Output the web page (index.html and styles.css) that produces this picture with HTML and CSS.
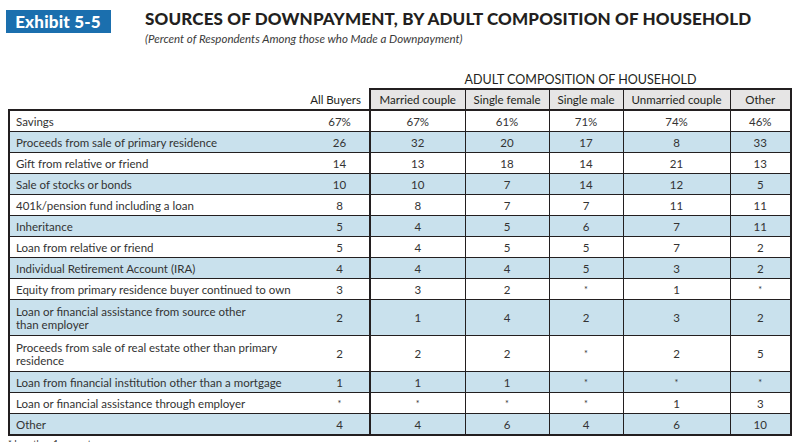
FILE: index.html
```html
<!DOCTYPE html>
<html>
<head>
<meta charset="utf-8">
<link rel="stylesheet" href="styles.css">
</head>
<body>
<div class="page">
  <header class="top">
    <div class="badge">Exhibit 5-5</div>
    <div class="titles">
      <h1 class="title">SOURCES OF DOWNPAYMENT, BY ADULT COMPOSITION OF HOUSEHOLD</h1>
      <p class="sub">(Percent of Respondents Among those who Made a Downpayment)</p>
    </div>
  </header>
  <table class="data">
    <colgroup>
      <col class="w-label"><col class="w-all"><col class="w-mc"><col class="w-sf"><col class="w-sm"><col class="w-uc"><col class="w-ot">
    </colgroup>
    <thead>
      <tr class="group"><th colspan="2"></th><th colspan="5">ADULT COMPOSITION OF HOUSEHOLD</th></tr>
      <tr class="cols">
        <th class="blank"></th>
        <th class="all">All Buyers</th>
        <th class="c first">Married couple</th>
        <th class="c">Single female</th>
        <th class="c">Single male</th>
        <th class="c">Unmarried couple</th>
        <th class="c last">Other</th>
      </tr>
    </thead>
    <tbody>
      <tr><td class="lab">Savings</td><td>67%</td><td class="first">67%</td><td>61%</td><td>71%</td><td>74%</td><td class="last">46%</td></tr>
      <tr class="alt"><td class="lab">Proceeds from sale of primary residence</td><td>26</td><td class="first">32</td><td>20</td><td>17</td><td>8</td><td class="last">33</td></tr>
      <tr><td class="lab">Gift from relative or friend</td><td>14</td><td class="first">13</td><td>18</td><td>14</td><td>21</td><td class="last">13</td></tr>
      <tr class="alt"><td class="lab">Sale of stocks or bonds</td><td>10</td><td class="first">10</td><td>7</td><td>14</td><td>12</td><td class="last">5</td></tr>
      <tr><td class="lab">401k/pension fund including a loan</td><td>8</td><td class="first">8</td><td>7</td><td>7</td><td>11</td><td class="last">11</td></tr>
      <tr class="alt"><td class="lab">Inheritance</td><td>5</td><td class="first">4</td><td>5</td><td>6</td><td>7</td><td class="last">11</td></tr>
      <tr><td class="lab">Loan from relative or friend</td><td>5</td><td class="first">4</td><td>5</td><td>5</td><td>7</td><td class="last">2</td></tr>
      <tr class="alt"><td class="lab">Individual Retirement Account (IRA)</td><td>4</td><td class="first">4</td><td>4</td><td>5</td><td>3</td><td class="last">2</td></tr>
      <tr><td class="lab">Equity from primary residence buyer continued to own</td><td>3</td><td class="first">3</td><td>2</td><td class="ast">*</td><td>1</td><td class="last ast">*</td></tr>
      <tr class="alt tall"><td class="lab">Loan or financial assistance from source other<br>than employer</td><td>2</td><td class="first">1</td><td>4</td><td>2</td><td>3</td><td class="last">2</td></tr>
      <tr class="tall"><td class="lab">Proceeds from sale of real estate other than primary<br>residence</td><td>2</td><td class="first">2</td><td>2</td><td class="ast">*</td><td>2</td><td class="last">5</td></tr>
      <tr class="alt"><td class="lab">Loan from financial institution other than a mortgage</td><td>1</td><td class="first">1</td><td>1</td><td class="ast">*</td><td class="ast">*</td><td class="last ast">*</td></tr>
      <tr><td class="lab">Loan or financial assistance through employer</td><td class="ast">*</td><td class="first ast">*</td><td class="ast">*</td><td class="ast">*</td><td>1</td><td class="last">3</td></tr>
      <tr class="alt end"><td class="lab">Other</td><td>4</td><td class="first">4</td><td>6</td><td>4</td><td>6</td><td class="last">10</td></tr>
    </tbody>
  </table>
  <p class="foot">* Less than 1 percent</p>
</div>
</body>
</html>
```

FILE: styles.css
```css
html, body {
  margin: 0;
  padding: 0;
  background: #ffffff;
}
.page {
  width: 797px;
  height: 442px;
  overflow: hidden;
  font-family: Lato, "Open Sans", sans-serif;
  color: #231f20;
}
.top {
  display: flex;
  align-items: flex-start;
  padding: 10px 0 0 6px;
}
.badge {
  width: 105px;
  height: 23px;
  background: #1b6fae;
  color: #ffffff;
  font-weight: 900;
  font-size: 17px;
  line-height: 23px;
  text-align: center;
  box-sizing: border-box;
  padding-right: 1px;
  letter-spacing: 0.2px;
}
.titles {
  margin-left: 34px;
}
.title {
  margin: 0;
  font-size: 17px;
  font-weight: 900;
  line-height: 20px;
  margin-top: -1px;
  letter-spacing: 0.15px;
  color: #231f20;
}
.sub {
  margin: 3px 0 0 0;
  font-size: 11.5px;
  font-style: italic;
  line-height: 13px;
  color: #3a3a3a;
}
.data {
  margin: 22px 0 0 8px;
  border-collapse: collapse;
  table-layout: fixed;
  width: 782px;
  font-size: 11.5px;
  color: #333333;
}
.w-label { width: 301px; }
.w-all { width: 60px; }
.w-mc { width: 95px; }
.w-sf { width: 84px; }
.w-sm { width: 74px; }
.w-uc { width: 107px; }
.w-ot { width: 61px; }

.group th {
  font-weight: 400;
  font-size: 12.5px;
  color: #231f20;
  height: 20px;
  padding: 0 0 1px 0;
  text-align: center;
  vertical-align: bottom;
}
.cols th {
  font-weight: 400;
  height: 19px;
  padding: 0;
  font-size: 11.5px;
  color: #231f20;
  vertical-align: middle;
}
.cols .all {
  text-align: right;
  padding-right: 8px;
}
.cols .c {
  background: #e6e5e5;
  border: 1px solid #231f20;
  border-top: 2px solid #231f20;
  text-align: center;
}
.cols .c.first { border-left: 2px solid #231f20; }
.cols .c.last { border-right: 2px solid #231f20; }

tbody td {
  height: 20px;
  padding: 0;
  text-align: center;
  border-top: 1px solid #231f20;
  border-bottom: 1px solid #231f20;
  line-height: 13px;
  vertical-align: middle;
}
tbody tr:first-child td { border-top: 2px solid #231f20; }
tbody tr.end td { border-bottom: 2px solid #231f20; }
tbody td.lab {
  text-align: left;
  padding-left: 6px;
  border-left: 2px solid #231f20;
}
tbody td.first { border-left: 2px solid #231f20; }
tbody td.first ~ td { border-left: 1px solid #231f20; }
tbody td.last { border-right: 2px solid #231f20; }
tbody tr.alt td { background: #c9e1ed; }
tbody tr.tall td { height: 35px; }
tbody td.ast { font-size: 9px; vertical-align: middle; }

.foot {
  margin: 2px 0 0 8px;
  font-size: 9px;
  line-height: 11px;
  color: #333333;
}
```
